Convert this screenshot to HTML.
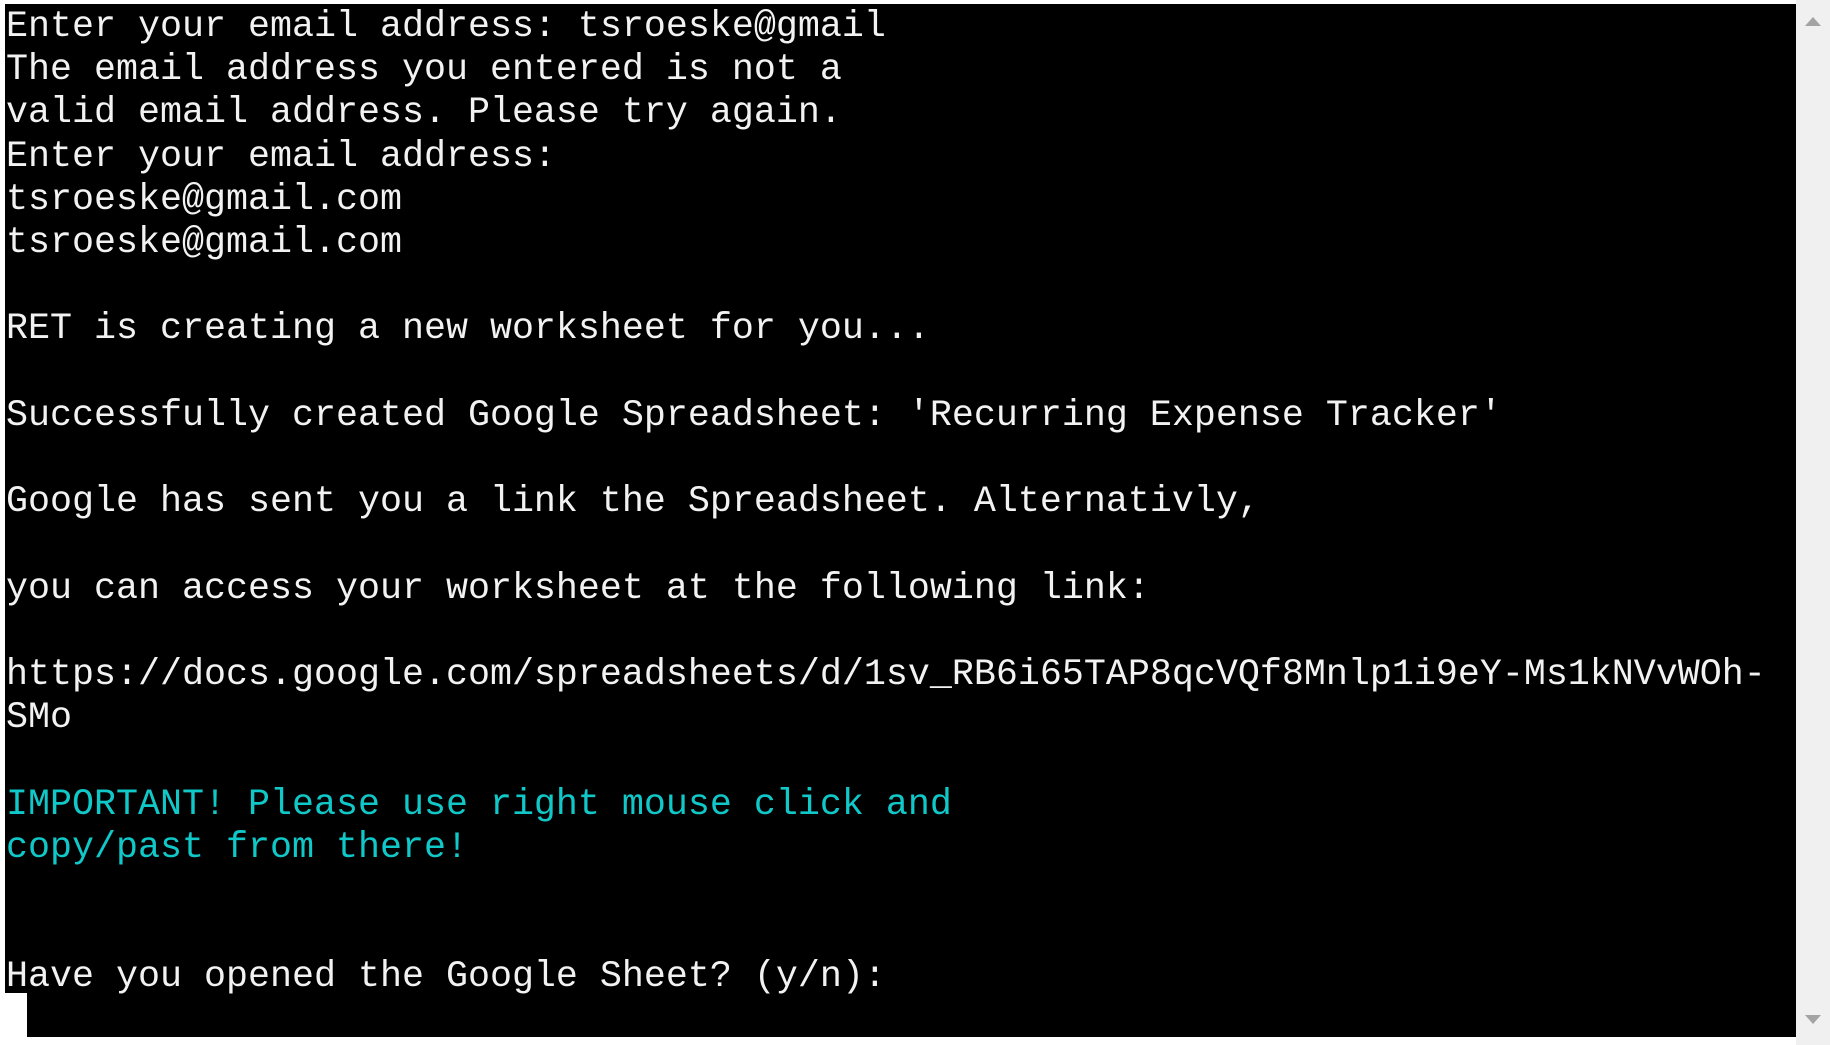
<!DOCTYPE html>
<html><head><meta charset="utf-8"><style>
html,body{margin:0;padding:0;width:1830px;height:1045px;background:#fff;overflow:hidden;}
#term{position:absolute;left:5px;top:4px;width:1791px;height:1033px;background:#000;}
#notch{position:absolute;left:5px;top:993px;width:22px;height:52px;background:#fff;}
#sb{position:absolute;left:1796px;top:0;width:34px;height:1045px;background:#f0f0f0;}
pre{position:absolute;left:6px;top:6px;margin:0;font-family:"Liberation Mono",monospace;font-size:36.67px;line-height:43.2px;color:#f2f2f2;white-space:pre;}
.c{color:#11c8c8;}
.up{position:absolute;left:1805px;top:17px;width:0;height:0;border-left:8px solid transparent;border-right:8px solid transparent;border-bottom:9px solid #a3a3a3;}
.dn{position:absolute;left:1805px;top:1015px;width:0;height:0;border-left:8px solid transparent;border-right:8px solid transparent;border-top:9px solid #a3a3a3;}
</style></head><body>
<div id="term"></div>
<div id="notch"></div>
<div id="sb"></div>
<div class="up"></div><div class="dn"></div>
<pre>Enter your email address: tsroeske@gmail
The email address you entered is not a
valid email address. Please try again.
Enter your email address:
tsroeske@gmail.com
tsroeske@gmail.com

RET is creating a new worksheet for you...

Successfully created Google Spreadsheet: 'Recurring Expense Tracker'

Google has sent you a link the Spreadsheet. Alternativly,

you can access your worksheet at the following link:

https://docs.google.com/spreadsheets/d/1sv_RB6i65TAP8qcVQf8Mnlp1i9eY-Ms1kNVvWOh-
SMo

<span class="c">IMPORTANT! Please use right mouse click and
copy/past from there!</span>


Have you opened the Google Sheet? (y/n):</pre>
</body></html>
